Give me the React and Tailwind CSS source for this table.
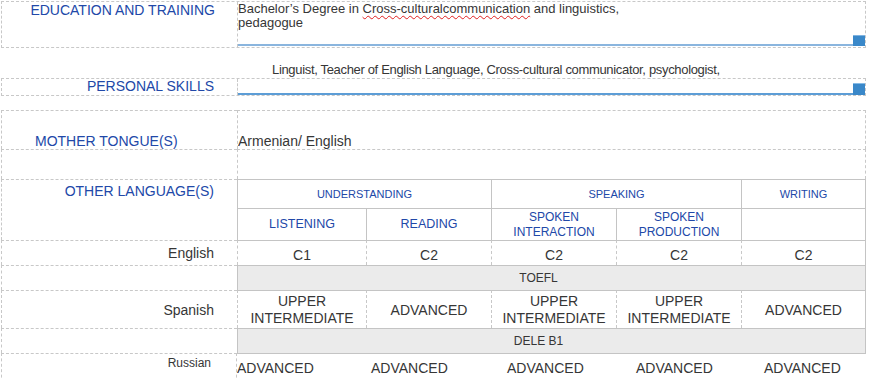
import React from "react";

// shared border looks
const DASH = "border-dashed border-[#c8c8c8]";
const SOLID = "border-solid border-[#c4c4c4]";
const BLUE = "text-[#2148a8]";
const INK = "text-[#363636]";

// value cell in a data row: solid top, dashed left
const dataCell =
  "border-t border-l [border-top-style:solid] [border-left-style:dashed] border-t-[#c4c4c4] border-l-[#c8c8c8] flex justify-center";
const lastDataCell = dataCell + " border-r [border-right-style:solid] border-r-[#c4c4c4]";

const labelCell = "border-t border-l " + DASH;

const levels = {
  english: ["C1", "C2", "C2", "C2", "C2"],
  spanish: [
    ["UPPER", "INTERMEDIATE"],
    ["ADVANCED"],
    ["UPPER", "INTERMEDIATE"],
    ["UPPER", "INTERMEDIATE"],
    ["ADVANCED"],
  ],
  russian: ["pl-0", "pl-[5px]", "pl-[16px]", "pl-[20px]", "pl-[23px]"],
};

function Level({ lines }) {
  if (lines.length === 1) {
    return <span className="text-[14px] leading-4">{lines[0]}</span>;
  }
  return (
    <span className="text-[14px] leading-[16.5px] text-center">
      {lines[0]}
      <br />
      {lines[1]}
    </span>
  );
}

export default function App() {
  return (
    <div className={`w-[871px] h-[380px] overflow-hidden bg-white font-['Liberation_Sans',Arial,sans-serif] ${INK}`}>
      {/* Education and training */}
      <div className={`ml-px mt-px flex h-[47px] w-[865px] border ${DASH}`}>
        <div className={`w-[236px] shrink-0 border-r ${DASH} pr-[22px] text-right text-[14px] leading-4 ${BLUE}`}>
          EDUCATION AND TRAINING
        </div>
        <div className="flex flex-1 flex-col">
          <p className="text-[13px] leading-[14px]">
            Bachelor’s Degree in{" "}
            <span className="underline decoration-wavy decoration-[#e02020] decoration-1 underline-offset-2">
              Cross-culturalcommunication
            </span>{" "}
            and linguistics,
            <br />
            pedagogue
          </p>
          <div className="mt-auto mb-px flex items-end">
            <div className="h-[2px] flex-1 bg-[#8ab5de]" />
            <div className="h-[11px] w-[12px] border-t border-[#7fb3e0] bg-[#3a88c9]" />
          </div>
        </div>
      </div>

      {/* Personal skills */}
      <div className="h-[30px] pt-[14px] pl-[272px] text-[13px] leading-[15px] tracking-[-0.33px]">
        Linguist, Teacher of English Language, Cross-cultural communicator, psychologist,
      </div>
      <div className={`ml-px flex h-[18px] w-[865px] border ${DASH}`}>
        <div className={`w-[236px] shrink-0 border-r ${DASH} pr-[23px] text-right text-[14px] leading-[14px] ${BLUE}`}>
          PERSONAL SKILLS
        </div>
        <div className="flex flex-1 items-end">
          <div className="h-[2px] flex-1 bg-[#5c9dd6]" />
          <div className="h-[12px] w-[12px] border-t border-[#86bbe6] bg-[#3a88c9]" />
        </div>
      </div>

      {/* Languages */}
      <div className="ml-px mt-[14px] grid w-[865px] grid-cols-[236px_129px_125px_125px_125px_125px] grid-rows-[39px_30px_29px_32px_25px_25px_38px_25px_30px]">
        {/* mother tongue */}
        <div className={`${labelCell} flex items-end pl-[33px] text-[14px] leading-4 ${BLUE}`}>
          MOTHER TONGUE(S)
        </div>
        <div className={`col-span-5 border-t border-l border-r ${DASH} flex items-end text-[14px] leading-4`}>
          Armenian/ English
        </div>
        <div className={labelCell} />
        <div className={`col-span-5 border-t border-l border-r ${DASH}`} />

        {/* other languages header */}
        <div className={`${labelCell} row-span-2 pt-[3px] pr-[23px] text-right text-[14px] leading-4 ${BLUE}`}>
          OTHER LANGUAGE(S)
        </div>
        <div className={`col-span-2 border-t border-l ${SOLID} flex items-center justify-center text-[11px] leading-[13px] ${BLUE}`}>
          UNDERSTANDING
        </div>
        <div className={`col-span-2 border-t border-l ${SOLID} flex items-center justify-center text-[11px] leading-[13px] ${BLUE}`}>
          SPEAKING
        </div>
        <div className={`border-t border-l border-r ${SOLID} flex items-center justify-center text-[11px] leading-[13px] ${BLUE}`}>
          WRITING
        </div>
        <div className={`border-t border-l ${SOLID} flex items-center justify-center text-[12.5px] leading-[15px] ${BLUE}`}>
          LISTENING
        </div>
        <div className={`border-t border-l ${SOLID} flex items-center justify-center text-[12.5px] leading-[15px] ${BLUE}`}>
          READING
        </div>
        <div className={`border-t border-l ${SOLID} flex items-center justify-center text-center text-[12px] leading-[15px] ${BLUE}`}>
          SPOKEN
          <br />
          INTERACTION
        </div>
        <div className={`border-t border-l ${SOLID} flex items-center justify-center text-center text-[12px] leading-[15px] ${BLUE}`}>
          SPOKEN
          <br />
          PRODUCTION
        </div>
        <div className={`border-t border-l border-r ${SOLID}`} />

        {/* English */}
        <div className={`${labelCell} pt-[4px] pr-[23px] text-right text-[14px] leading-4`}>English</div>
        {levels.english.map((v, i) => (
          <div
            key={i}
            className={`${i === 4 ? lastDataCell : dataCell} pt-[6px] text-[14px] leading-4`}>
            {v}
          </div>
        ))}
        <div className={labelCell} />
        <div className={`col-span-5 border-t border-l border-r ${SOLID} bg-[#ebebeb] flex items-center justify-center pr-[26px] text-[12px] leading-[14px]`}>
          TOEFL
        </div>

        {/* Spanish */}
        <div className={`${labelCell} flex items-center justify-end pr-[23px] text-[14px] leading-4`}>Spanish</div>
        {levels.spanish.map((lines, i) => (
          <div key={i} className={`${i === 4 ? lastDataCell : dataCell} items-center whitespace-nowrap`}>
            <Level lines={lines} />
          </div>
        ))}
        <div className={labelCell} />
        <div className={`col-span-5 border-t border-l border-r ${SOLID} bg-[#ebebeb] flex items-center justify-center pr-[26px] text-[12px] leading-[14px]`}>
          DELE B1
        </div>

        {/* Russian */}
        <div className={`${labelCell} border-r pt-[2px] pr-[25px] text-right text-[12px] leading-[14px]`}>Russian</div>
        {levels.russian.map((pad, i) => (
          <div
            key={i}
            className={`border-t ${SOLID} ${pad} pt-[6px] text-[14px] leading-4 whitespace-nowrap`}>
            ADVANCED
          </div>
        ))}
      </div>
    </div>
  );
}
